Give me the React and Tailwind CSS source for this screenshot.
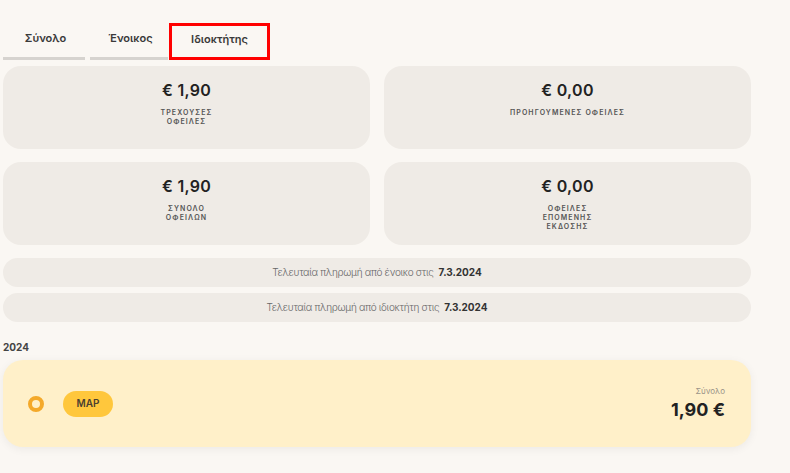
import { useState } from "react";

const cards = [
  { amount: "€ 1,90", label: ["ΤΡΕΧΟΥΣΕΣ", "ΟΦΕΙΛΕΣ"] },
  { amount: "€ 0,00", label: ["ΠΡΟΗΓΟΥΜΕΝΕΣ ΟΦΕΙΛΕΣ"] },
  { amount: "€ 1,90", label: ["ΣΥΝΟΛΟ", "ΟΦΕΙΛΩΝ"] },
  { amount: "€ 0,00", label: ["ΟΦΕΙΛΕΣ", "ΕΠΟΜΕΝΗΣ", "ΕΚΔΟΣΗΣ"] },
];

const payments = [
  { text: "Τελευταία πληρωμή από ένοικο στις", date: "7.3.2024" },
  { text: "Τελευταία πληρωμή από ιδιοκτήτη στις", date: "7.3.2024" },
];

function Tabs() {
  const [active, setActive] = useState(2);
  const tabs = [
    { name: "Σύνολο", w: "w-[82px]" },
    { name: "Ένοικος", w: "w-[78px]" },
    { name: "Ιδιοκτήτης", w: "w-[101px]" },
  ];
  return (
    <div className="flex items-end gap-[5px] h-[60px]">
      {tabs.map((tab, i) =>
        i === active ? (
          <button
            key={tab.name}
            onClick={() => setActive(i)}
            className={`${tab.w} h-[37px] -ml-[4px] border-[3px] border-[#ff0000] text-[11px] font-semibold text-[#3a3a3a] pb-[5px]`}
          >
            {tab.name}
          </button>
        ) : (
          <button
            key={tab.name}
            onClick={() => setActive(i)}
            className={`${tab.w} h-[37px] border-b-[3px] border-[#d6d3cf] text-[11px] font-semibold text-[#3a3a3a] pb-[4px] pl-[3px]`}
          >
            {tab.name}
          </button>
        )
      )}
    </div>
  );
}

function App() {
  return (
    <div
      className="min-h-[473px] bg-[#faf7f3] pl-[3px] w-[790px] overflow-hidden"
      style={{ fontFamily: "Inter, 'Noto Sans', sans-serif" }}
    >
      <div className="w-[748px]">
        <Tabs />
        <div className="grid grid-cols-2 gap-x-[14px] gap-y-[13px] mt-[6px]">
          {cards.map((c, i) => (
            <div
              key={i}
              className="h-[83px] rounded-[18px] bg-[#efebe6] flex flex-col items-center pt-[13px]"
            >
              <div className="text-[16px] font-semibold text-[#222] leading-[22px] tracking-[0.3px]">
                {c.amount}
              </div>
              <div className="mt-[7px] flex flex-col items-center text-[7px] font-semibold tracking-[1.1px] text-[#555] leading-[9px]">
                {c.label.map((l) => (
                  <span key={l}>{l}</span>
                ))}
              </div>
            </div>
          ))}
        </div>
        <div className="flex flex-col gap-[6px] mt-[13px]">
          {payments.map((p) => (
            <div
              key={p.text}
              className="h-[29px] rounded-full bg-[#efebe6] flex items-center justify-center gap-[5px] text-[10px]"
            >
              <span className="text-[#666] font-light tracking-[-0.3px]">{p.text}</span>
              <span className="font-bold text-[#333]">{p.date}</span>
            </div>
          ))}
        </div>
        <div className="mt-[18px] text-[10px] font-bold text-[#444] leading-[14px]">2024</div>
        <div className="mt-[6px] h-[87px] rounded-[20px] bg-[#fff0c9] shadow-[0_2px_10px_rgba(0,0,0,0.06)] flex items-center pl-[25px] pr-[26px]">
          <div className="w-[16px] h-[16px] rounded-full border-[4px] border-[#f4a92a] bg-[#fff0c9]"></div>
          <div className="ml-[19px] h-[26px] w-[50px] rounded-full bg-[#ffc73c] flex items-center justify-center text-[10px] font-semibold text-[#4a4030]">
            MAP
          </div>
          <div className="ml-auto flex flex-col items-end">
            <span className="text-[8px] text-[#9a9388] leading-[10px]">Σύνολο</span>
            <span className="text-[18px] font-bold text-[#222] leading-[22px] mt-[3px]">1,90 €</span>
          </div>
        </div>
      </div>
    </div>
  );
}

export default App;
